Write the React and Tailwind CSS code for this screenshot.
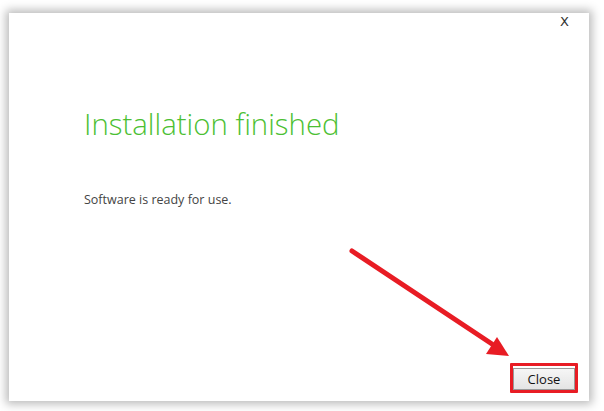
import React from 'react';

const Arrow = () => (
  <svg className="absolute left-0 top-0 pointer-events-none" width="604" height="411" viewBox="0 0 604 411">
    <line x1="352" y1="251" x2="492" y2="344" stroke="#e81c24" strokeWidth="5" strokeLinecap="round" />
    <polygon points="509,356 486,354 497,337" fill="#e81c24" />
  </svg>
);

export default function App() {
  return (
    <div className="relative w-[604px] h-[411px] bg-white overflow-hidden pl-[9px] pt-[13px]">
      <div
        className="relative w-[580px] h-[388px] bg-white shadow-[0_0_9px_3px_rgba(0,0,0,0.28)] flex flex-col"
        style={{ fontFamily: '"Open Sans", "Noto Sans", sans-serif' }}
      >
        <div className="flex justify-end pr-[20px] pt-[2px] h-[20px]">
          <span className="text-[13px] text-[#333] leading-none" style={{ fontFamily: '"DejaVu Sans", sans-serif' }}>X</span>
        </div>
        <div className="pl-[75px] pt-[77px]">
          <h1 className="text-[29.4px] font-light text-[#4cbf33] leading-none">Installation finished</h1>
          <p className="mt-[55px] text-[12.5px] text-[#444] leading-none">Software is ready for use.</p>
        </div>
        <div className="mt-auto flex justify-end pr-[11px] pb-[8px]">
          <div className="border-[3px] border-[#e81c24] rounded-[1px]">
            <button className="w-[62px] h-[22px] border border-[#9a9a9a] bg-gradient-to-b from-[#f6f6f6] to-[#e4e4e4] text-[13px] text-[#111] leading-none">
              Close
            </button>
          </div>
        </div>
      </div>
      <Arrow />
    </div>
  );
}
